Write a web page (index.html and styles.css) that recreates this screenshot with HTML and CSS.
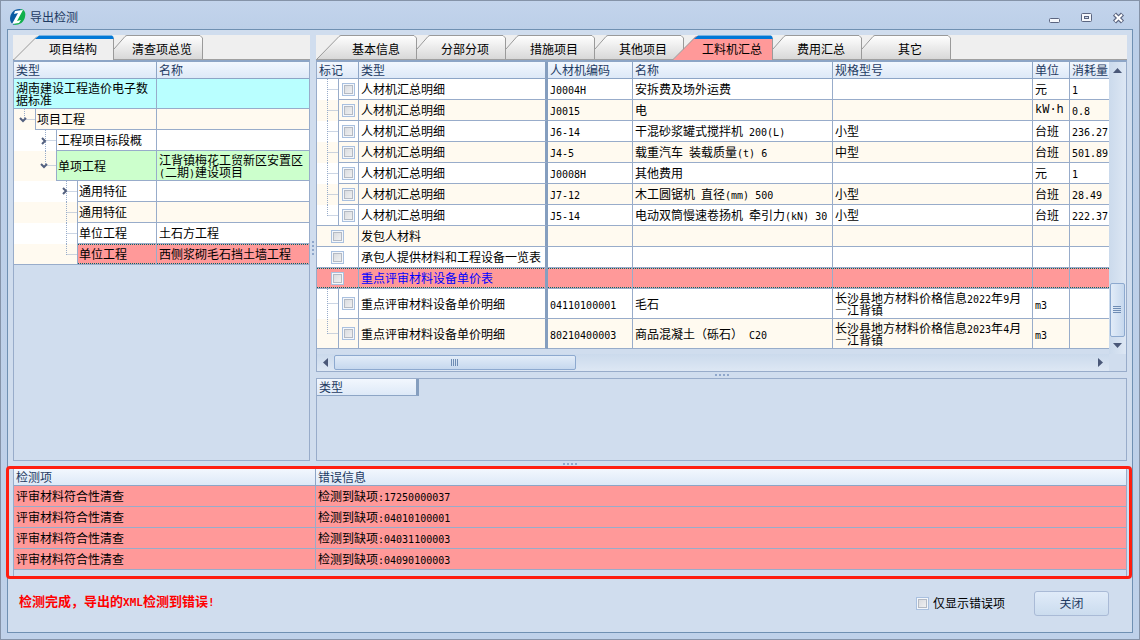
FILE: index.html
```html
<!DOCTYPE html>
<html lang="zh-CN">
<head>
<meta charset="utf-8">
<title>导出检测</title>
<link rel="stylesheet" href="styles.css">
</head>
<body>
<svg class="defs" width="0" height="0" aria-hidden="true">
  <defs>
    <linearGradient id="tabfill" x1="0" y1="0" x2="0" y2="1"><stop offset="0" stop-color="#fff"/><stop offset="1" stop-color="#d8d8d8"/></linearGradient>
    <symbol id="tab-first" overflow="visible"><path d="M-11 24L11 1.5Q12 .5 13 .5H86L88.500 3V24z" fill="url(#tabfill)"/><path d="M-11 24L11 1.5Q12 .5 13 .5H86L88.500 3V24" fill="none" stroke="#9a9a9a"/></symbol>
    <symbol id="tab-next" overflow="visible"><path d="M0 14L11 1.5Q12 .5 13 .5H86L88.500 3V24H0z" fill="url(#tabfill)"/><path d="M0 14L11 1.5Q12 .5 13 .5H86L88.500 3V24" fill="none" stroke="#9a9a9a"/></symbol>
    <symbol id="tab-active" overflow="visible"><path d="M-11 25L12 1H88V25z" fill="currentColor"/><path d="M-11 24.500L12 1.500M88.500 3V25" fill="none" stroke="#9a9a9a"/><path d="M10 4L14 0.500H87L88.500 2V4z" fill="#0078d7"/></symbol>
    <symbol id="open" overflow="visible"><path d="M-3 -2L0 1L3 -2" fill="none" stroke="#53607f" stroke-width="2"/></symbol>
    <symbol id="shut" overflow="visible"><path d="M-2 -3L1 0L-2 3" fill="none" stroke="#53607f" stroke-width="2"/></symbol>
  </defs>
</svg>
<div class="window">
  <header class="titlebar">
    <svg class="logo" width="18" height="18" viewBox="0 0 18 18" aria-hidden="true">
      <path d="M11 1C4 1 1 6 1 11c0 3 2 5 4 6L12 1z" fill="#0a5aa2"/>
      <path d="M12 1c4 1 5 4 4 8-1 5-5 8-11 8z" fill="#10b04b"/>
      <path d="M6 3l8-1-6 11 4-1-2 3-7 1 6-11-4 1z" fill="#fff"/>
    </svg>
    <h1 class="title">导出检测</h1>
    <div class="controls">
      <button type="button" aria-label="最小化"><svg width="12" height="12"><rect x=".5" y="6.500" width="10" height="4" rx="1" fill="#f5f7fb" stroke="#5b6580"/></svg></button>
      <button type="button" aria-label="最大化"><svg width="12" height="12"><rect x=".5" y="1.500" width="10" height="8" rx="1" fill="#f5f7fb" stroke="#5b6580"/><rect x="3.500" y="4.500" width="4" height="2" fill="#cdd8e8" stroke="#5b6580"/></svg></button>
      <button type="button" aria-label="关闭窗口"><svg width="12" height="12"><path d="M1.500 2L9.500 10M9.500 2L1.500 10" stroke="#5b6580" stroke-width="4.500"/><path d="M2 2.500L9 9.500M9 2.500L2 9.500" stroke="#fff" stroke-width="2"/></svg></button>
    </div>
  </header>

  <main class="client">
    <div class="panes">
      <section class="pane">
        <nav class="tabs">
          <button type="button" class="tab active"><svg class="shape"><use href="#tab-active"/></svg><span>项目结构</span></button>
          <button type="button" class="tab"><svg class="shape"><use href="#tab-next"/></svg><span>清查项总览</span></button>
        </nav>
        <div class="box grow">
          <table class="grid">
            <colgroup><col class="c-tree"><col></colgroup>
            <thead><tr><th>类型</th><th>名称</th></tr></thead>
            <tbody>
              <tr class="tall cyan"><td>湖南建设工程造价电子数据标准</td><td></td></tr>
              <tr class="alt"><td class="tree"><div class="node"><svg width="21" height="21"><path class="link" d="M10.500 0V11M10.500 10.500H21"/><use href="#open" x="9" y="11"/></svg><span class="label">项目工程</span></div></td><td></td></tr>
              <tr><td class="tree"><div class="node"><svg width="42" height="21"><path class="link" d="M31.500 0V21M31.500 10.500H42"/><use href="#shut" x="30" y="11"/></svg><span class="label">工程项目标段概</span></div></td><td></td></tr>
              <tr class="tall alt"><td class="tree"><div class="node"><svg width="42" height="30"><path class="link" d="M31.500 0V15M31.500 14.500H42"/><use href="#open" x="30" y="15"/></svg><span class="label green">单项工程</span></div></td><td class="green">江背镇梅花工贸新区安置区<i class="a">(</i>二期<i class="a">)</i>建设项目</td></tr>
              <tr><td class="tree"><div class="node"><svg width="63" height="21"><path class="link" d="M52.500 0V21M52.500 10.500H63"/><use href="#shut" x="51" y="10"/></svg><span class="label">通用特征</span></div></td><td></td></tr>
              <tr class="alt"><td class="tree"><div class="node"><svg width="63" height="21"><path class="link" d="M52.500 0V21M52.500 10.500H63"/></svg><span class="label">通用特征</span></div></td><td></td></tr>
              <tr><td class="tree"><div class="node"><svg width="63" height="21"><path class="link" d="M52.500 0V21M52.500 10.500H63"/></svg><span class="label">单位工程</span></div></td><td>土石方工程</td></tr>
              <tr class="alt last"><td class="tree"><div class="node"><svg width="63" height="21"><path class="link" d="M52.500 0V11M52.500 10.500H63"/></svg><span class="label picked">单位工程</span></div></td><td class="picked">西侧浆砌毛石挡土墙工程</td></tr>
            </tbody>
          </table>
        </div>
      </section>

      <div class="split upright" role="separator"><b></b><b></b><b></b><b></b></div>

      <section class="pane">
        <nav class="tabs">
          <button type="button" class="tab"><svg class="shape"><use href="#tab-first"/></svg><span>基本信息</span></button>
          <button type="button" class="tab"><svg class="shape"><use href="#tab-next"/></svg><span>分部分项</span></button>
          <button type="button" class="tab"><svg class="shape"><use href="#tab-next"/></svg><span>措施项目</span></button>
          <button type="button" class="tab"><svg class="shape"><use href="#tab-next"/></svg><span>其他项目</span></button>
          <button type="button" class="tab active error"><svg class="shape"><use href="#tab-active"/></svg><span>工料机汇总</span></button>
          <button type="button" class="tab"><svg class="shape"><use href="#tab-next"/></svg><span>费用汇总</span></button>
          <button type="button" class="tab"><svg class="shape"><use href="#tab-next"/></svg><span>其它</span></button>
        </nav>
        <div class="box grow scroller">
          <div class="view">
          <table class="grid">
            <colgroup><col class="c-mark"><col class="c-type"><col class="c-code"><col class="c-name"><col><col class="c-unit"><col class="c-qty"></colgroup>
            <thead><tr><th>标记</th><th class="fix">类型</th><th>人材机编码</th><th>名称</th><th>规格型号</th><th>单位</th><th>消耗量</th></tr></thead>
            <tbody>
              <tr><td class="tree"><div class="node"><svg width="21" height="21"><path class="link" d="M10.500 0V21M10.500 10.500H21"/></svg><span class="label"><input type="checkbox" aria-label="标记 J0004H"></span></div></td><td class="fix">人材机汇总明细</td><td><i class="a">J0004H</i></td><td>安拆费及场外运费</td><td></td><td>元</td><td><i class="a">1</i></td></tr>
              <tr class="alt"><td class="tree"><div class="node"><svg width="21" height="21"><path class="link" d="M10.500 0V21M10.500 10.500H21"/></svg><span class="label"><input type="checkbox" aria-label="标记 J0015"></span></div></td><td class="fix">人材机汇总明细</td><td><i class="a">J0015</i></td><td>电</td><td></td><td class="wide">kW·h</td><td><i class="a">0.8</i></td></tr>
              <tr><td class="tree"><div class="node"><svg width="21" height="21"><path class="link" d="M10.500 0V21M10.500 10.500H21"/></svg><span class="label"><input type="checkbox" aria-label="标记 J6-14"></span></div></td><td class="fix">人材机汇总明细</td><td><i class="a">J6-14</i></td><td>干混砂浆罐式搅拌机<i class="a"> 200(L)</i></td><td>小型</td><td>台班</td><td><i class="a">236.27</i></td></tr>
              <tr class="alt"><td class="tree"><div class="node"><svg width="21" height="21"><path class="link" d="M10.500 0V21M10.500 10.500H21"/></svg><span class="label"><input type="checkbox" aria-label="标记 J4-5"></span></div></td><td class="fix">人材机汇总明细</td><td><i class="a">J4-5</i></td><td>载重汽车<i class="a"> </i>装载质量<i class="a">(t) 6</i></td><td>中型</td><td>台班</td><td><i class="a">501.89</i></td></tr>
              <tr><td class="tree"><div class="node"><svg width="21" height="21"><path class="link" d="M10.500 0V21M10.500 10.500H21"/></svg><span class="label"><input type="checkbox" aria-label="标记 J0008H"></span></div></td><td class="fix">人材机汇总明细</td><td><i class="a">J0008H</i></td><td>其他费用</td><td></td><td>元</td><td><i class="a">1</i></td></tr>
              <tr class="alt"><td class="tree"><div class="node"><svg width="21" height="21"><path class="link" d="M10.500 0V21M10.500 10.500H21"/></svg><span class="label"><input type="checkbox" aria-label="标记 J7-12"></span></div></td><td class="fix">人材机汇总明细</td><td><i class="a">J7-12</i></td><td>木工圆锯机<i class="a"> </i>直径<i class="a">(mm) 500</i></td><td>小型</td><td>台班</td><td><i class="a">28.49</i></td></tr>
              <tr class="last"><td class="tree"><div class="node"><svg width="21" height="21"><path class="link" d="M10.500 0V11M10.500 10.500H21"/></svg><span class="label"><input type="checkbox" aria-label="标记 J5-14"></span></div></td><td class="fix">人材机汇总明细</td><td><i class="a">J5-14</i></td><td>电动双筒慢速卷扬机<i class="a"> </i>牵引力<i class="a">(kN) 30</i></td><td>小型</td><td>台班</td><td><i class="a">222.37</i></td></tr>
              <tr class="alt"><td class="mid"><input type="checkbox" aria-label="标记 发包人材料"></td><td class="fix">发包人材料</td><td></td><td></td><td></td><td></td><td></td></tr>
              <tr><td class="mid"><input type="checkbox" aria-label="标记 承包人提供材料"></td><td class="fix">承包人提供材料和工程设备一览表</td><td></td><td></td><td></td><td></td><td></td></tr>
              <tr class="picked-row"><td class="mid"><input type="checkbox" aria-label="标记 重点评审材料"></td><td class="fix">重点评审材料设备单价表</td><td></td><td></td><td></td><td></td><td></td></tr>
              <tr class="tall"><td class="tree"><div class="node"><svg width="21" height="30"><path class="link" d="M10.500 0V30M10.500 14.500H21"/></svg><span class="label"><input type="checkbox" aria-label="标记 04110100001"></span></div></td><td class="fix">重点评审材料设备单价明细</td><td><i class="a">04110100001</i></td><td>毛石</td><td>长沙县地方材料价格信息<i class="a">2022</i>年<i class="a">9</i>月<br>—江背镇</td><td><i class="a">m3</i></td><td></td></tr>
              <tr class="tall alt last"><td class="tree"><div class="node"><svg width="21" height="30"><path class="link" d="M10.500 0V15M10.500 14.500H21"/></svg><span class="label"><input type="checkbox" aria-label="标记 80210400003"></span></div></td><td class="fix">重点评审材料设备单价明细</td><td><i class="a">80210400003</i></td><td>商品混凝土（砾石）<i class="a"> C20</i></td><td>长沙县地方材料价格信息<i class="a">2023</i>年<i class="a">4</i>月<br>—江背镇</td><td><i class="a">m3</i></td><td></td></tr>
            </tbody>
          </table>
          </div>
          <div class="vbar">
            <svg width="17" height="17"><path d="M4 11L8.500 6L13 11z" fill="#4a5878"/></svg>
            <div class="track"><div class="thumb"><svg width="9" height="9"><path d="M0 .5H8M0 2.500H8M0 4.500H8M0 6.500H8" stroke="#6e8cb4"/></svg></div></div>
            <svg width="17" height="17"><path d="M4 6L8.500 11L13 6z" fill="#4a5878"/></svg>
          </div>
          <div class="hbar">
            <svg width="17" height="17"><path d="M11 4L6 8.500L11 13z" fill="#4a5878"/></svg>
            <div class="track"><div class="thumb"><svg width="9" height="9"><path d="M.5 1V8M2.500 1V8M4.500 1V8M6.500 1V8" stroke="#6e8cb4"/></svg></div></div>
            <svg width="17" height="17"><path d="M6 4L11 8.500L6 13z" fill="#4a5878"/></svg>
          </div>
        </div>
        <div class="split" role="separator"><b></b><b></b><b></b><b></b></div>
        <div class="box detail">
          <table class="grid small"><thead><tr><th class="fix">类型</th></tr></thead></table>
        </div>
      </section>
    </div>

    <div class="split" role="separator"><b></b><b></b><b></b><b></b></div>

    <section class="results">
      <div class="box">
        <table class="grid">
          <colgroup><col class="c-item"><col></colgroup>
          <thead><tr><th>检测项</th><th>错误信息</th></tr></thead>
          <tbody class="errors">
            <tr><td>评审材料符合性清查</td><td>检测到缺项<i class="a">:17250000037</i></td></tr>
            <tr><td>评审材料符合性清查</td><td>检测到缺项<i class="a">:04010100001</i></td></tr>
            <tr><td>评审材料符合性清查</td><td>检测到缺项<i class="a">:04031100003</i></td></tr>
            <tr><td>评审材料符合性清查</td><td>检测到缺项<i class="a">:04090100003</i></td></tr>
          </tbody>
        </table>
      </div>
      <div class="frame"></div>
    </section>

    <footer class="footer">
      <p class="status">检测完成，导出的<i class="a">XML</i>检测到错误<i class="a">!</i></p>
      <label class="only"><input type="checkbox"><span>仅显示错误项</span></label>
      <button type="button" class="close">关闭</button>
    </footer>
  </main>
</div>
</body>
</html>
```
FILE: styles.css
```css
* { box-sizing: border-box; }

body {
  margin: 0;
  font: 12px/12px "Noto Sans CJK SC", sans-serif;
  color: #000;
}

button { font: inherit; color: inherit; border: 0; background: none; padding: 0; }

.defs { position: absolute; }

.window {
  display: flex;
  flex-direction: column;
  min-height: 100vh;
  padding: 0 6px 6px;
  border: 1px solid #8593a8;
  background: linear-gradient(#c3d4ec, #bccfe8 28px, #bfd1e9);
}

.titlebar { display: flex; align-items: center; height: 28px; padding: 4px 8px 0 2px; }
.logo { margin-right: 3px; }
.title { flex: 1; margin: 0; font-size: 12px; font-weight: 400; color: #1e3a62; }
.controls { display: flex; gap: 20px; padding-top: 2px; }
.controls button { display: block; width: 12px; height: 12px; }
.controls svg { display: block; }

.client {
  flex: 1;
  display: flex;
  flex-direction: column;
  padding: 5px 5px 0;
  border: 1px solid #6f90b2;
  background: #d0ddee;
}

.panes { flex: 1; display: grid; grid-template-columns: 297px 6px minmax(0, 1fr); }
.pane { display: flex; flex-direction: column; min-width: 0; }

/* tabs */
.tabs {
  display: flex;
  height: 25px;
  padding-left: 12px;
  border-bottom: 1px solid #a0a0a0;
  background: #efefef;
}
.tab { position: relative; width: 89px; height: 24px; padding: 3px 0 0 7px; color: #efefef; }
.tab span { position: relative; color: #000; }
.tab.active { z-index: 1; }
.tab.error { color: #ff9999; }
.shape { position: absolute; left: 0; top: 0; width: 89px; height: 24px; overflow: visible; }

/* panels and grids */
.box { border: 1px solid #98acca; background: #d0ddee; }
.grow { flex: 1; border-top: 2px solid #8da5c6; }
.detail { height: 83px; }

.grid { width: 100%; table-layout: fixed; border-collapse: separate; border-spacing: 0; }
.grid tr { height: 21px; background: #fff; }
.grid tr.alt { background: #fffaf0; }
.grid tr.tall { height: 30px; }
.grid thead tr { height: 17px; background: linear-gradient(#f2f7fe, #dce8f7); }
.grid th {
  padding: 0 0 0 2px;
  text-align: left;
  font-weight: 400;
  line-height: 16px;
  color: #1e3a62;
  white-space: nowrap;
  overflow: hidden;
  border-right: 1px solid #8da5c6;
  border-bottom: 1px solid #8da5c6;
}
.grid td {
  padding: 0 0 0 2px;
  overflow: hidden;
  border-right: 1px solid #98acca;
  border-bottom: 1px solid #98acca;
}
.grid th.fix, .grid td.fix { border-right: 3px solid #859ebf; }
.grid td:last-child, .grid th:last-child { border-right: 0; }
.grid th.fix:last-child { border-right: 3px solid #859ebf; }
.grid.small { width: 102px; }

.grid td.tree { padding: 0; border-bottom: 0; }
.node { display: flex; height: 21px; }
.tall .node { height: 30px; }
.node svg { flex: none; display: block; }
.link { fill: none; stroke: #98acca; stroke-dasharray: 1 1; }
.label {
  flex: 1;
  display: flex;
  align-items: center;
  padding-left: 1px;
  white-space: nowrap;
  overflow: hidden;
  border-left: 1px solid #98acca;
  border-bottom: 1px solid #98acca;
}
.last td.tree { border-bottom: 1px solid #98acca; }
.last .node { height: 20px; }
.tall.last .node { height: 29px; }
.last .label { border-bottom: 0; }

.a { font: 10px/8px "DejaVu Sans Mono", monospace; white-space: pre; }
.wide { font-family: "Liberation Mono", monospace; }

.cyan td { background: #b9ffff; }
.green { background: #ccffcc; }
.errors td, .picked-row td { background: #ff9999; }
.picked, .picked-row td {
  background:
    repeating-linear-gradient(90deg, #066 0 1px, transparent 1px 2px) top / 100% 1px no-repeat,
    repeating-linear-gradient(90deg, #066 0 1px, transparent 1px 2px) bottom / 100% 1px no-repeat,
    #ff9999;
}
.picked-row { color: #0000ff; }

.c-tree { width: 143px; }
.c-mark { width: 42px; }
.c-type { width: 189px; }
.c-code { width: 85px; }
.c-name { width: 200px; }
.c-unit { width: 37px; }
.c-qty { width: 39px; }
.c-item { width: 302px; }

input[type="checkbox"] {
  appearance: none;
  flex: none;
  display: block;
  width: 13px;
  height: 13px;
  margin: 0;
  border: 1px solid #a9c0df;
  background: linear-gradient(135deg, #d4d7dc, #f5f5f5);
  box-shadow: inset 0 0 0 1px #f4f7fb, inset 0 0 0 2px #b4bac4;
}
.label input { margin-left: 2px; }
.grid td.mid { padding-left: 14px; }

/* scroll bars */
.scroller { display: grid; grid-template: minmax(0, 1fr) 17px / minmax(0, 1fr) 17px; }
.view { padding-bottom: 5px; }
.vbar, .hbar { display: flex; }
.vbar { flex-direction: column; background: linear-gradient(90deg, #cbdaec, #dde7f4); }
.hbar { background: linear-gradient(#cbdaec, #dde7f4); }
.track { flex: 1; display: flex; }
.thumb {
  display: flex;
  align-items: center;
  justify-content: center;
  border: 1px solid #8da9cf;
  border-radius: 2px;
}
.vbar .track { align-items: flex-end; padding: 0 1px; }
.vbar .thumb { width: 15px; height: 54px; background: linear-gradient(90deg, #e2ecf8, #c6d8ee); }
.hbar .thumb { width: 242px; height: 15px; margin-top: 1px; background: linear-gradient(#e2ecf8, #c6d8ee); }

.split { display: flex; align-items: center; justify-content: center; gap: 2px; height: 6px; }
.split b { width: 2px; height: 2px; background: #8fa7cb; }
.split.upright { flex-direction: column; height: auto; }

/* results */
.results { position: relative; }
.results .box { height: 111px; padding-top: 1px; }
.frame {
  position: absolute;
  inset: -1px -5px -1px -7px;
  border: 3px solid #ff1e10;
  border-radius: 4px;
  pointer-events: none;
}

.footer { display: flex; align-items: center; height: 54px; padding: 0 18px 4px 6px; }
.status { flex: 1; margin: 0; padding-bottom: 4px; font-size: 13px; font-weight: 700; color: #ff0000; }
.status .a { font-size: 11px; font-weight: 700; }
.only { display: flex; align-items: center; gap: 4px; margin-right: 29px; }
.close {
  width: 75px;
  height: 25px;
  border: 1px solid #a9bad6;
  border-radius: 3px;
  background: linear-gradient(#e0ebf9, #cbdcee);
  color: #1e3a62;
}
```
